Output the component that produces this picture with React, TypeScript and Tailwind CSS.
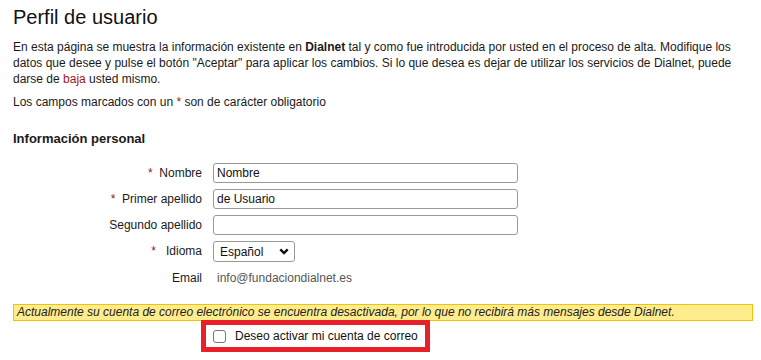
import React from "react";

export default function App() {
  const req = <span className="text-[#8b1c1c]">*</span>;
  return (
    <div className="font-['Liberation_Sans',Arial,sans-serif] text-[12px] text-[#1a1a1a] bg-white w-[761px] h-[360px] overflow-hidden pl-[13px]">
      <h1 className="text-[20px] leading-[24px] pt-[5px] text-[#111]">Perfil de usuario</h1>
      <p className="mt-[10px] leading-[16px] w-[745px]">
        En esta página se muestra la información existente en <b>Dialnet</b> tal y como fue introducida por usted en el proceso de alta. Modifique los
        <br />
        datos que desee y pulse el botón "Aceptar" para aplicar los cambios. Si lo que desea es dejar de utilizar los servicios de Dialnet, puede
        <br />
        darse de <span className="text-[#a01818]">baja</span> usted mismo.
      </p>
      <p className="mt-[7px] leading-[16px]">
        Los campos marcados con un {req} son de carácter obligatorio
      </p>
      <h2 className="mt-[21px] text-[13px] font-bold leading-[16px]">Información personal</h2>
      <div className="mt-[16px] grid grid-cols-[189px_auto] gap-x-[11px] gap-y-[6px] items-center">
        <label className="text-right leading-[20px]">{req}&nbsp; Nombre</label>
        <input
          readOnly
          value="Nombre"
          className="w-[305px] h-[20px] border border-[#999] rounded-[3px] pl-[3px] text-[12px] text-[#111] outline-none"
        />
        <label className="text-right leading-[20px]">{req}&nbsp; Primer apellido</label>
        <input
          readOnly
          value="de Usuario"
          className="w-[305px] h-[20px] border border-[#999] rounded-[3px] pl-[3px] text-[12px] text-[#111] outline-none"
        />
        <label className="text-right leading-[20px]">Segundo apellido</label>
        <input
          readOnly
          value=""
          className="w-[305px] h-[20px] border border-[#999] rounded-[3px] pl-[3px] text-[12px] text-[#111] outline-none"
        />
        <label className="text-right leading-[21px]">{req}&nbsp;&nbsp; Idioma</label>
        <div className="w-[82px] h-[21px] border border-[#999] rounded-[3px] flex items-center justify-between pl-[6px] pr-[5px] text-[12px] text-[#111]">
          <span>Español</span>
          <svg width="10" height="7" viewBox="0 0 10 7">
            <path d="M1.3 1.3 L5 5 L8.7 1.3" fill="none" stroke="#111" strokeWidth="2.4" />
          </svg>
        </div>
        <label className="text-right leading-[20px]">Email</label>
        <span className="leading-[20px] text-[#555] pl-[4px]">info@fundaciondialnet.es</span>
      </div>
      <div className="mt-[16px] w-[740px] border border-[#f0c20a] bg-[#ffec8c] leading-[15px] pl-[3px] italic text-[#222]">
        Actualmente su cuenta de correo electrónico se encuentra desactivada, por lo que no recibirá más mensajes desde Dialnet.
      </div>
      <div className="relative ml-[188px] mt-[-1px] w-[229px] h-[32px] border-[5px] border-[#e8202a] flex items-center pl-[7px]">
        <span className="w-[13px] h-[13px] border border-[#767676] rounded-[3px] bg-white shrink-0" />
        <span className="ml-[9px] text-[#111]">Deseo activar mi cuenta de correo</span>
      </div>
    </div>
  );
}
